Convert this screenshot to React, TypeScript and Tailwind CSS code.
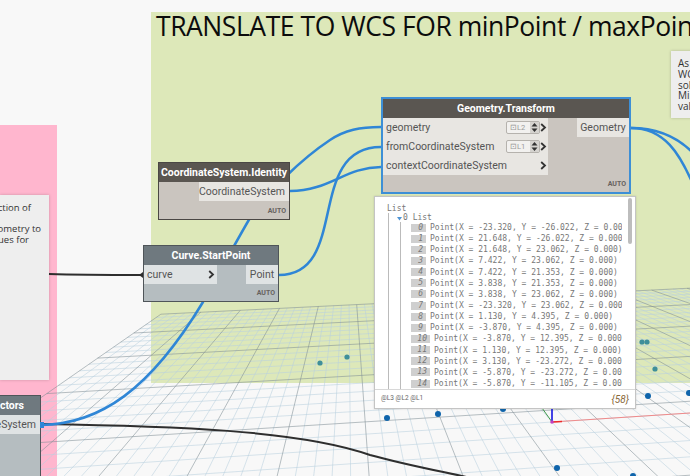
import React from "react";

// floor grid: homography from two vanishing points
const O = [552, 422];
const VP_U = [8520, -96];
const VP_V = [348, 184];
const A = 0.0019;
const B = 0.05;

const project = (u: number, v: number) => {
  const a = u * A;
  const b = v * B;
  const d = a + b + 1;
  return [(a * VP_U[0] + b * VP_V[0] + O[0]) / d, (a * VP_U[1] + b * VP_V[1] + O[1]) / d];
};

const U_MIN = -37;
const U_MAX = 60;
const V_MIN = -16;
const V_MAX = 21;

const gridLine = (x1: number, y1: number, x2: number, y2: number) => {
  const p = project(x1, y1);
  const q = project(x2, y2);
  return `M${p[0].toFixed(1)} ${p[1].toFixed(1)}L${q[0].toFixed(1)} ${q[1].toFixed(1)}`;
};

const buildGrid = () => {
  let minor = "";
  let major = "";
  for (let u = U_MIN; u <= U_MAX; u++) {
    const d = gridLine(u, V_MIN, u, V_MAX);
    if ((u + 37) % 5 === 0) major += d;
    else minor += d;
  }
  for (let v = V_MIN; v <= V_MAX; v++) {
    const d = gridLine(U_MIN, v, U_MAX, v);
    if ((v - 21) % 5 === 0) major += d;
    else minor += d;
  }
  return { minor, major };
};

const grid = buildGrid();

const floorDots = [
  [387, 418],
  [438, 414],
  [503, 409],
  [648, 396],
  [689, 393],
  [557, 468],
  [633, 476],
];

const greenDots = [
  [320, 363],
  [347, 357],
  [642, 342],
  [647, 342],
  [655, 369],
];

const points = [
  "Point(X = -23.320, Y = -26.022, Z = 0.000)",
  "Point(X = 21.648, Y = -26.022, Z = 0.000)",
  "Point(X = 21.648, Y = 23.062, Z = 0.000)",
  "Point(X = 7.422, Y = 23.062, Z = 0.000)",
  "Point(X = 7.422, Y = 21.353, Z = 0.000)",
  "Point(X = 3.838, Y = 21.353, Z = 0.000)",
  "Point(X = 3.838, Y = 23.062, Z = 0.000)",
  "Point(X = -23.320, Y = 23.062, Z = 0.000)",
  "Point(X = 1.130, Y = 4.395, Z = 0.000)",
  "Point(X = -3.870, Y = 4.395, Z = 0.000)",
  "Point(X = -3.870, Y = 12.395, Z = 0.000)",
  "Point(X = 1.130, Y = 12.395, Z = 0.000)",
  "Point(X = 3.130, Y = -23.272, Z = 0.000)",
  "Point(X = -5.870, Y = -23.272, Z = 0.000)",
  "Point(X = -5.870, Y = -11.105, Z = 0.000)",
];

const Chevron = () => (
  <svg width="7" height="9" viewBox="0 0 7 9" className="shrink-0">
    <path d="M1.2 1 L5 4.5 L1.2 8" fill="none" stroke="#333" strokeWidth="1.8" />
  </svg>
);

const Spinner = ({ label }: { label: string }) => (
  <div className="flex h-[13px] w-[34px] items-center justify-between rounded-[2px] border border-[#b5b2ad] bg-[#f2f1ef] pl-[3px] text-[7.5px] text-[#999]">
    <span>⊡{label}</span>
    <svg width="9" height="11" viewBox="0 0 9 11">
      <rect width="9" height="11" fill="#d5d3cf" />
      <path d="M4.5 1 L7.5 4.5 H1.5 Z M4.5 10 L7.5 6.5 H1.5 Z" fill="#333" />
    </svg>
  </div>
);

const Auto = () => (
  <div className="absolute bottom-[3px] right-[3px] text-[7px] font-bold leading-[9px] text-[#66625e]">AUTO</div>
);

export default function App() {
  return (
    <div className="relative h-[476px] w-[690px] overflow-hidden bg-[#f8f8f8] font-['Roboto',sans-serif]">
      {/* groups */}
      <div className="absolute left-0 top-[125px] h-[351px] w-[57px] bg-[#ffb6ce]" />
      <div className="absolute left-[151px] top-[12px] h-[371px] w-[539px] bg-[#dde8b9]">
        <div className="ml-[5px] mt-[-1px] whitespace-nowrap font-['Open_Sans',sans-serif] text-[26.5px] leading-[30px] tracking-[-0.45px] text-[#0c0c0c]">
          TRANSLATE TO WCS FOR minPoint / maxPoint
        </div>
      </div>

      {/* floor */}
      <svg className="absolute inset-0" width="690" height="476" viewBox="0 0 690 476">
        <path d={grid.minor} fill="none" stroke="#b9d0de" strokeOpacity="0.8" strokeWidth="0.7" />
        <path d={grid.major} fill="none" stroke="#7f8d95" strokeOpacity="0.7" strokeWidth="0.8" />
        {floorDots.map(([x, y]) => (
          <circle key={`${x}-${y}`} cx={x} cy={y} r="3" fill="#0f64ab" />
        ))}
        {greenDots.map(([x, y]) => (
          <circle key={`${x}-${y}`} cx={x} cy={y} r="2.6" fill="#3f8f9a" />
        ))}
        <path d="M552 422 L690 413" stroke="#f08a8a" strokeWidth="1" />
        <path d="M552 422 L562 421.5" stroke="#ee2a2a" strokeWidth="1.6" />
        <path d="M552 422 L542 408" stroke="#3f9a4a" strokeWidth="1" />
        <path d="M552 422 L552 408" stroke="#1414e0" strokeWidth="1.6" />
        <circle cx="552" cy="422" r="1.8" fill="#c040c0" />
      </svg>

      {/* notes */}
      <div className="absolute left-0 top-[195px] flex h-[185px] w-[49px] flex-col items-end bg-[#eeeeee] pt-[8px] font-['Open_Sans',sans-serif] text-[9.5px] leading-[10.5px] text-[#333] shadow-[0_0_3px_rgba(0,0,0,0.2)]">
        <div className="mr-[18px] whitespace-nowrap">ection of</div>
        <div className="h-[10.5px]" />
        <div className="mr-[8px] whitespace-nowrap">eometry to</div>
        <div className="mr-[20px] whitespace-nowrap">lues for</div>
      </div>
      <div className="absolute left-[671px] top-[51px] h-[67px] w-[60px] bg-[#eeeeee] pl-[7px] pt-[7px] font-['Open_Sans',sans-serif] text-[10px] leading-[10.8px] text-[#333] shadow-[0_0_3px_rgba(0,0,0,0.2)]">
        <div>As a</div>
        <div>WCS</div>
        <div>solid</div>
        <div>Minimum</div>
        <div>values</div>
      </div>

      {/* wires */}
      <svg className="absolute inset-0" width="690" height="476" viewBox="0 0 690 476" fill="none">
        <g stroke="#2e2e2e" strokeWidth="2">
          <path d="M49 274 C80 275 110 275 143 275" />
          <path d="M41 424 C170 426 300 430 370 455 C410 466 445 472 480 480" />
        </g>
        <g stroke="#2f86d6" strokeWidth="2.5">
          <path d="M41 425 C100 424 150 390 203 302 C225 262 240 235 250 218 C270 190 300 160 330 140 C345 130 360 127 381 127" />
          <path d="M290 191 C330 191 345 167 381 167" />
          <path d="M279 275 C350 275 305 147 381 147" />
          <path d="M631 128 C660 128 680 140 692 152" />
          <path d="M631 128 C665 128 680 155 692 182" />
        </g>
        <path d="M143 272 L139 275 L143 278 Z" fill="#2e2e2e" />
      </svg>

      {/* CoordinateSystem.Identity */}
      <div className="absolute left-[158px] top-[162px] h-[58px] w-[132px] border border-[#4a4744] bg-[#cac5bf] text-[#555]">
        <div className="flex h-[19px] items-center justify-center bg-[#5a5651] text-[10.5px] font-bold text-white">
          CoordinateSystem.Identity
        </div>
        <div className="ml-[40px] flex h-[19px] items-center justify-end bg-[#e8e6e2] pr-[4px] text-[10.5px]">
          CoordinateSystem
        </div>
        <Auto />
      </div>

      {/* Curve.StartPoint */}
      <div className="absolute left-[143px] top-[245px] h-[57px] w-[136px] border border-[#4f5559] bg-[#b5bdc0] text-[#555]">
        <div className="flex h-[19px] items-center justify-center bg-[#6f797f] text-[10.5px] font-bold text-white">
          Curve.StartPoint
        </div>
        <div className="flex justify-between">
          <div className="flex h-[19px] w-[73px] items-center justify-between bg-[#dfe3e4] pl-[3px] pr-[2px] text-[10.5px]">
            curve
            <Chevron />
          </div>
          <div className="flex h-[19px] w-[32px] items-center justify-center bg-[#dfe3e4] text-[10.5px]">Point</div>
        </div>
        <Auto />
      </div>

      {/* Geometry.Transform */}
      <div className="absolute left-[381px] top-[97px] h-[97px] w-[250px] border-2 border-[#3d8fd6] bg-[#cac5bf] text-[#555]">
        <div className="flex h-[19px] items-center justify-center bg-[#5a5651] text-[10.5px] font-bold text-white">
          Geometry.Transform
        </div>
        <div className="flex justify-between">
          <div className="flex w-[165px] flex-col">
            <div className="flex h-[19px] items-center justify-between bg-[#e8e6e2] pl-[3px] pr-[1px] text-[10.5px]">
              geometry
              <div className="flex items-center">
                <Spinner label="L2" />
                <Chevron />
              </div>
            </div>
            <div className="flex h-[19px] items-center justify-between bg-[#e8e6e2] pl-[3px] pr-[1px] text-[10.5px]">
              fromCoordinateSystem
              <div className="flex items-center">
                <Spinner label="L1" />
                <Chevron />
              </div>
            </div>
            <div className="flex h-[19px] items-center justify-between bg-[#e8e6e2] pl-[3px] pr-[1px] text-[10.5px]">
              contextCoordinateSystem
              <Chevron />
            </div>
          </div>
          <div className="flex h-[19px] w-[52px] items-center justify-center bg-[#e8e6e2] text-[10.5px]">Geometry</div>
        </div>
        <Auto />
      </div>

      {/* watch list */}
      <div className="absolute left-[374px] top-[196px] flex h-[213px] w-[262px] flex-col border border-[#c4c4c4] bg-white shadow-[0_0_2px_rgba(0,0,0,0.15)]">
        <div className="h-[192px] overflow-hidden pl-[12px] pt-[6px] font-['DejaVu_Sans_Mono',monospace] text-[8px] leading-[11px] text-[#777]">
          <div className="h-[10px]">List</div>
          <div className="ml-[1px] h-[176px] border-l border-[#bbb] pl-[8px]">
            <div className="flex h-[9px] items-center">
              <svg width="5" height="5" viewBox="0 0 5 5" className="mr-[1px] mt-[2px]">
                <path d="M0 1 H5 L2.5 4.5 Z" fill="#4f94d4" />
              </svg>
              0 List
            </div>
            <div className="ml-[3px] h-[167px] border-l border-[#bbb] pl-[10px]">
              {points.map((text, i) => (
                <div key={i} className="flex h-[11.15px] w-[211px] items-center overflow-hidden whitespace-nowrap">
                  <span className={i < 10 ? "mr-[4px] h-[8px] w-[15px] shrink-0 bg-[#cfcfcf] pr-[3px] text-right italic leading-[8px]" : "mr-[4px] h-[8px] w-[19px] shrink-0 bg-[#cfcfcf] pr-[3px] text-right italic leading-[8px]"}>
                    {i}
                  </span>
                  {text}
                </div>
              ))}
            </div>
          </div>
        </div>
        <div className="flex flex-1 items-center justify-between border-t border-[#d8d8d8] pl-[6px] pr-[6px]">
          <span className="text-[6.5px] text-[#666]">@L3 @L2 @L1</span>
          <span className="text-[10px] italic text-[#8a6a3a]">{"{58}"}</span>
        </div>
        <div className="absolute left-[253px] top-[1px] h-[46px] w-[4px] rounded-[2px] bg-[#bdbdbd]" />
      </div>

      {/* partly visible node, bottom left */}
      <div className="absolute left-[-60px] top-[395px] h-[90px] w-[101px] border border-[#4f5559] bg-[#b5bdc0] text-[#555]">
        <div className="flex h-[19px] items-center justify-end bg-[#6f797f] pr-[16px] text-[10.5px] font-bold text-white">
          ectors
        </div>
        <div className="flex h-[19px] items-center justify-end bg-[#dfe3e4] pr-[4px] text-[10.5px]">eSystem</div>
      </div>
      <div className="absolute left-[40px] top-[422px] h-[6px] w-[4px] bg-[#2f86d6]" />
    </div>
  );
}
